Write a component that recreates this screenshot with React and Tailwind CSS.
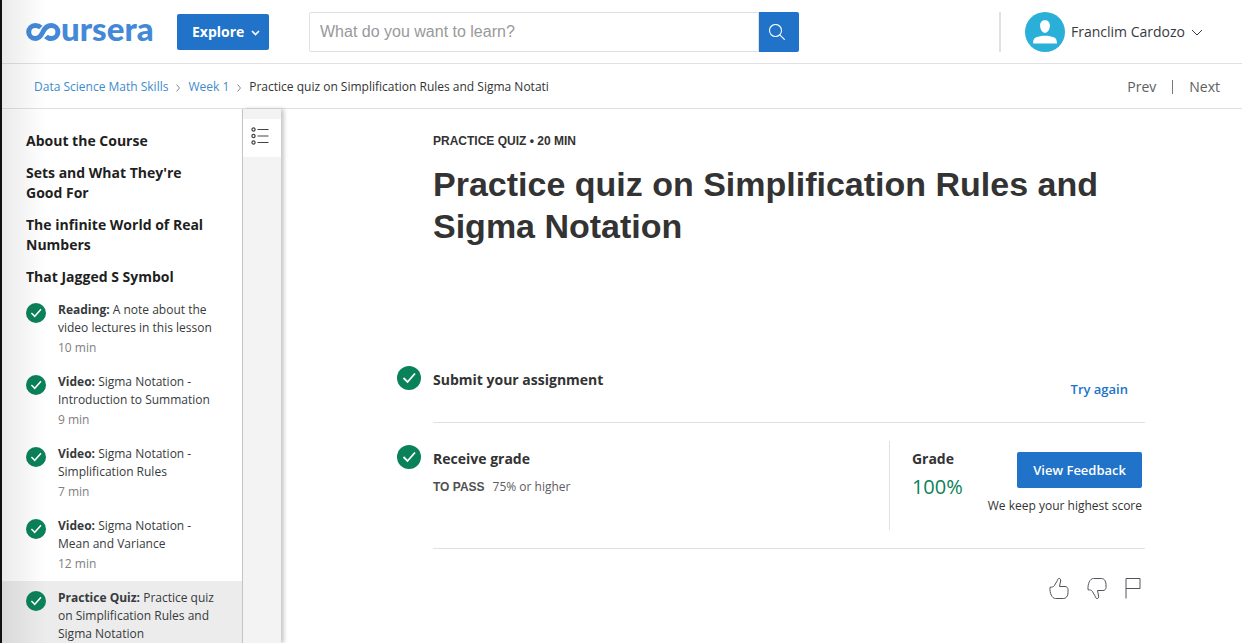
import React from "react";

const lessons = [
  "About the Course",
  "Sets and What They're Good For",
  "The infinite World of Real Numbers",
  "That Jagged S Symbol",
];

const items = [
  { kind: "Reading:", title: "A note about the video lectures in this lesson", time: "10 min" },
  { kind: "Video:", title: "Sigma Notation - Introduction to Summation", time: "9 min" },
  { kind: "Video:", title: "Sigma Notation - Simplification Rules", time: "7 min" },
  { kind: "Video:", title: "Sigma Notation - Mean and Variance", time: "12 min" },
  { kind: "Practice Quiz:", title: "Practice quiz on Simplification Rules and Sigma Notation", time: "20 min", active: true },
];

function Check({ className }) {
  return (
    <svg viewBox="0 0 24 24" className={className} aria-hidden="true">
      <circle cx="12" cy="12" r="12" fill="#0a8259" />
      <path d="M6.5 12l4 4 7.5-8.5" fill="none" stroke="#fff" strokeWidth="1.8" />
    </svg>
  );
}

function Chevron({ className, d = "M1 1l5 5 5-5", box = "0 0 12 7", width = 1 }) {
  return (
    <svg viewBox={box} className={className} fill="none" stroke="currentColor" strokeWidth={width} aria-hidden="true">
      <path d={d} />
    </svg>
  );
}

function Logo() {
  return (
    <a href="#home" aria-label="coursera" className="flex h-9 w-32 shrink-0 items-center text-[#4489d8]">
      <svg viewBox="0 0 35 18" className="h-[18px] w-[35px] shrink-0" fill="none" stroke="currentColor" strokeWidth="5" aria-hidden="true">
        <path d="M14.800 4.600C13.400 3.200 11.400 2.500 9.200 2.500a6.500 6.500 0 0 0 0 13c3.700 0 5.600-2.300 7.400-6C18.500 5.200 21 2.500 25.400 2.500a6.500 6.500 0 0 1 0 13c-2.500 0-4.200-.8-5.400-2.200" />
      </svg>
      <span className="pb-2 font-['Lato',sans-serif] text-[33px] leading-9 font-black">ursera</span>
    </a>
  );
}

function Header() {
  return (
    <header className="flex h-16 shrink-0 items-center border-b border-[#e1e1e1] pr-[39px] pl-6">
      <Logo />
      <button className="ml-[23px] flex h-9 w-[92px] shrink-0 items-center justify-between rounded-xs bg-[#2073c8] pr-[9px] pl-[15px] text-sm font-bold text-white">
        Explore
        <Chevron className="mt-0.5 h-1.5 w-[9px]" d="M1 1l3.500 3.500L8 1" box="0 0 9 6" width={1.7} />
      </button>
      <form className="ml-10 flex h-10 w-[490px]" onSubmit={(e) => e.preventDefault()}>
        <input
          type="search"
          aria-label="Search"
          placeholder="What do you want to learn?"
          className="min-w-0 flex-1 rounded-l-xs border border-[#e1e1e1] px-2.5 font-['Liberation_Sans',Arial,sans-serif] text-base outline-none placeholder:text-[#999]"
        />
        <button aria-label="Submit search" className="flex w-10 items-center justify-center rounded-r-xs bg-[#2073c8] pr-1 text-white">
          <svg viewBox="0 0 16 16" className="size-4" fill="none" stroke="currentColor" strokeWidth="1.1" aria-hidden="true">
            <circle cx="6.500" cy="6.500" r="6" />
            <path d="M10.800 10.800l5 5" />
          </svg>
        </button>
      </form>
      <div className="ml-auto h-10 w-0.5 bg-[#e1e1e1]" />
      <button className="ml-6 flex shrink-0 items-center text-sm text-[#373a3c]">
        <svg viewBox="0 0 40 40" className="mr-1.5 size-10" aria-hidden="true">
          <circle cx="20" cy="20" r="20" fill="#2ab0d8" />
          <path d="M20 8.200c3 0 4.900 2 4.900 5.200 0 4-2.300 7.400-4.900 7.400s-4.900-3.400-4.900-7.400c0-3.200 1.900-5.200 4.900-5.200zM8 31.600c.2-3.800 1-5.400 3.300-6.300 2.200-.9 5-1.500 8.700-1.500s6.500.6 8.700 1.500c2.300.9 3.100 2.500 3.300 6.300z" fill="#fff" />
        </svg>
        Franclim Cardozo
        <Chevron className="mt-0.5 ml-1.5 h-[7px] w-3" />
      </button>
    </header>
  );
}

function SubHeader() {
  return (
    <div className="flex h-[45px] shrink-0 items-center justify-between border-b border-[#e1e1e1] pt-0.5 pr-[22px] pl-8">
      <nav aria-label="Breadcrumb" className="flex items-center gap-2 text-xs text-[#333]">
        <a href="#course" className="text-[#3e8ccb]">Data Science Math Skills</a>
        <Chevron className="mt-0.5 h-2 w-1 text-[#888]" d="M.5.5l3 3.500-3 3.500" box="0 0 4 8" />
        <a href="#week" className="text-[#3e8ccb]">Week 1</a>
        <Chevron className="mt-0.5 h-2 w-1 text-[#888]" d="M.5.5l3 3.500-3 3.500" box="0 0 4 8" />
        <span>Practice quiz on Simplification Rules and Sigma Notati</span>
      </nav>
      <nav aria-label="Pages" className="flex items-center gap-4 text-sm text-[#5e5e5e]">
        <a href="#prev">Prev</a>
        <span className="h-3.5 w-px bg-[#777]" />
        <a href="#next">Next</a>
      </nav>
    </div>
  );
}

function Sidebar() {
  return (
    <nav aria-label="Lessons" className="w-60 shrink-0 overflow-y-auto pt-[22px] [scrollbar-width:none]">
      <div className="flex flex-col gap-3 pr-9 pl-6 text-sm leading-5 font-bold text-[#1f1f1f]">
        {lessons.map((l) => (
          <h2 key={l}>{l}</h2>
        ))}
      </div>
      <ul className="mt-1.5 text-xs leading-[18px] text-[#373a3c]">
        {items.map((it) => (
          <li key={it.title}>
            <a href="#item" className={it.active ? "flex gap-3 bg-[#ececec] py-2 pr-5 pl-6" : "flex gap-3 py-2 pr-5 pl-6"}>
              <Check className="mt-0.5 size-5 shrink-0" />
              <span>
                <span className="block">
                  <b>{it.kind}</b> {it.title}
                </span>
                <span className="mt-0.5 block text-[#808080]">{it.time}</span>
              </span>
            </a>
          </li>
        ))}
      </ul>
    </nav>
  );
}

function Strip() {
  return (
    <div className="w-[39px] shrink-0 border-l border-[#c4c4c4] bg-[#f3f3f3] pt-2.5 shadow-[3px_0_4px_rgba(0,0,0,0.22)]">
      <button aria-label="Toggle lesson list" className="flex h-[38px] w-full items-center justify-center bg-white pr-1 pb-1 text-[#444]">
        <svg viewBox="0 0 18 18" className="size-[18px]" fill="none" stroke="currentColor" aria-hidden="true">
          <circle cx="2.500" cy="2.500" r="1.600" strokeWidth="1.200" />
          <circle cx="2.500" cy="9" r="1.600" strokeWidth="1.200" />
          <circle cx="2.500" cy="15.500" r="1.600" strokeWidth="1.200" />
          <path d="M6.500 2.500H17.500M6.500 9H17.500M6.500 15.500H17.500" />
        </svg>
      </button>
    </div>
  );
}

function Feedback() {
  return (
    <div className="mt-7 flex justify-end gap-[18px] pr-1 text-[#50555a]">
      <button aria-label="Like">
        <svg viewBox="0 0 20 22" className="h-[22px] w-5" fill="none" stroke="currentColor" strokeWidth="1" aria-hidden="true">
          <path d="M1 10.200c1.800 0 3.400-.2 4.200-1.400L8 4.200c.6-1.300.6-2.700 2-2.700s1.900 1 1.600 2.500L10.500 9.500H16c1.800 0 3 1.300 3 3v3.300c0 3.200-1.900 5.700-4.500 5.700H6.500C3 21.500.6 16.500 1 10.200z" />
        </svg>
      </button>
      <button aria-label="Dislike">
        <svg viewBox="0 0 20 22" className="h-[22px] w-5" fill="none" stroke="currentColor" strokeWidth="1" aria-hidden="true">
          <path d="M1 12.800c1.800 0 3.400.2 4.200 1.400L8 18.800c.6 1.300.6 2.700 2 2.700s1.900-1 1.600-2.500l-1.100-5.500H16c1.800 0 3-1.300 3-3V7.200c0-3.200-1.900-5.700-4.500-5.700H6.500C3 1.500.6 6.500 1 12.800z" />
        </svg>
      </button>
      <button aria-label="Report">
        <svg viewBox="0 0 16 22" className="h-[22px] w-4" fill="none" stroke="currentColor" strokeWidth="1" aria-hidden="true">
          <path d="M1 21.500V1.500h14v10H1" />
        </svg>
      </button>
    </div>
  );
}

function Main() {
  return (
    <main className="min-w-0 flex-1 overflow-y-auto pt-[22px] pr-[97px] pl-[116px] text-[#333] [scrollbar-width:none]">
      <div className="pl-9 font-['Liberation_Sans',Arial,sans-serif] font-bold">
        <p className="text-xs leading-5">PRACTICE QUIZ • 20 MIN</p>
        <h1 className="mt-3 text-[34px] leading-[42px]">Practice quiz on Simplification Rules and Sigma Notation</h1>
      </div>

      <section className="mt-[119px] flex gap-3">
        <Check className="size-6 shrink-0" />
        <div className="flex h-[57px] flex-1 justify-between border-b border-[#e1e1e1] pr-[17px]">
          <h2 className="pt-1 text-sm leading-5 font-bold">Submit your assignment</h2>
          <a href="#retry" className="pt-[13px] text-[13px] leading-5 font-semibold text-[#2073c8]">Try again</a>
        </div>
      </section>

      <section className="flex gap-3">
        <Check className="mt-[22px] size-6 shrink-0" />
        <div className="flex flex-1 items-start border-b border-[#e1e1e1] py-[18px]">
          <div className="flex-1 pt-2">
            <h2 className="text-sm leading-5 font-bold">Receive grade</h2>
            <p className="mt-2 flex gap-2 text-xs leading-5 text-[#5e5e5e]">
              <b className="font-['Liberation_Sans',Arial,sans-serif] text-[#505050]">TO PASS</b>
              75% or higher
            </p>
          </div>
          <div className="flex h-[89px] border-l border-[#e1e1e1] pr-[3px] pl-[22px]">
            <div className="pt-2">
              <h2 className="text-sm leading-5 font-bold">Grade</h2>
              <p className="mt-1 text-xl leading-7 text-[#0a8259]">100%</p>
            </div>
            <div className="ml-[25px] flex flex-col items-end pt-[11px]">
              <button className="h-9 rounded-xs bg-[#2073c8] px-4 pt-0.5 text-[13px] font-semibold text-white">View Feedback</button>
              <p className="mt-2 text-xs leading-5">We keep your highest score</p>
            </div>
          </div>
        </div>
      </section>

      <Feedback />
    </main>
  );
}

export default function App() {
  return (
    <div className="relative flex h-screen flex-col overflow-hidden border-l-2 border-[#111] bg-white font-['Open_Sans',sans-serif]">
      <Header />
      <SubHeader />
      <div className="flex min-h-0 flex-1">
        <Sidebar />
        <Strip />
        <Main />
      </div>
      <div className="pointer-events-none absolute inset-y-0 left-0 w-11 bg-linear-to-r from-black/8 to-transparent" />
    </div>
  );
}
